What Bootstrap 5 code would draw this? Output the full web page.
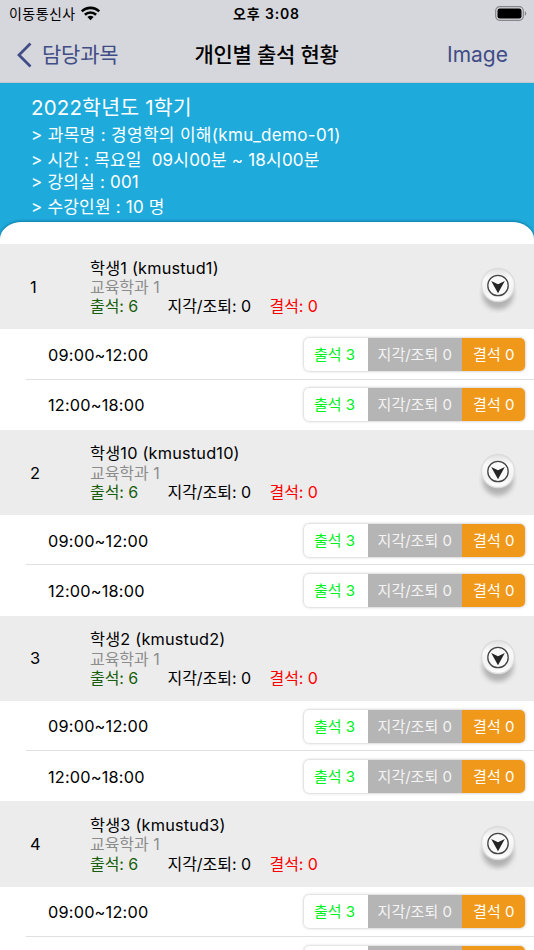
<!DOCTYPE html>
<html lang="ko">
<head>
<meta charset="utf-8">
<meta name="viewport" content="width=device-width, initial-scale=1">
<title>개인별 출석 현황</title>
<link href="https://cdn.jsdelivr.net/npm/bootstrap@5.3.0/dist/css/bootstrap.min.css" rel="stylesheet">
<style>
body{font-family:Inter,"Noto Sans CJK KR",sans-serif;font-size:16px;color:#000;background:#fff;height:950px;overflow:hidden}
.top-area{background:#d6d7dc;height:83px;border-bottom:1px solid #c4c8ce}
.status{height:27px;font-size:14px;line-height:27px;padding:0 7px 0 9px}
.status>*,.title-row>*{flex:1 1 0;white-space:nowrap}
.carrier{letter-spacing:.45px}
.clock{font-weight:600;letter-spacing:.85px;padding-right:3px}
.title-row{height:55px;padding:0 26px 0 16px;font-size:21px;line-height:55px}
.title-row .heading{font-weight:500;letter-spacing:-.25px;flex:0 0 auto;margin-left:9px}
.tint{color:#414d87}
.back{letter-spacing:-.2px}
.hero{background:#1eabdb;height:161px;color:#fff;padding-top:10px}
.hero-text{padding-left:31px;height:129px;white-space:pre}
.term{font-size:20.500px;line-height:29px;letter-spacing:.17px;height:30px}
.info{font-size:17px;line-height:25px;height:25px;letter-spacing:.2px}
.info.tight{line-height:19px;height:23px}
.info.last{line-height:23px}
.info.course{letter-spacing:.32px}
.sheet{background:#fff;height:22px;border-radius:22px 22px 0 0/17px 17px 0 0;box-shadow:0 -1px 3px rgba(0,50,90,.4);clip-path:inset(-5px 0 0 0)}
.student{background:#ececec;height:85.3px;padding-right:17px}
.num{width:90px;padding-left:30px;padding-top:1px;font-size:16.500px}
.lines{line-height:19.4px;white-space:pre;padding-top:2px;letter-spacing:-.05px}
.who{font-size:16.300px;letter-spacing:.2px}
.dept{color:#8c8c8c}
.present{color:#195e0d;width:77.500px}
.late{width:102px}
.absent{color:#f00}
.session{height:50.25px;padding:0 9px 0 48px}
.session.parted{background:linear-gradient(#e0e0e0,#e0e0e0) 26px 100%/100% 1px no-repeat}
.time{font-size:16.300px;letter-spacing:.2px;padding-top:1px}
.tallies{height:33px;border-radius:5px;box-shadow:0 0 3px rgba(0,0,0,.3);font-size:15px;line-height:34px;white-space:nowrap;text-align:center;overflow:hidden}
.ok{width:64px;color:#00f21c;padding-right:3px}
.tardy{width:93.500px;background:#b5b5b5;color:#f4f4f4}
.miss{width:63.500px;background:#f09819;color:#fff;padding-left:1px}
.knob{margin-top:5px}
</style>
<script src="https://cdn.jsdelivr.net/npm/bootstrap@5.3.0/dist/js/bootstrap.bundle.min.js"></script>
</head>
<body>
<svg width="0" height="0" class="position-absolute">
<defs>
<linearGradient id="face" x1="0" y1="0" x2="0" y2="1"><stop offset="0" stop-color="#e2e2e2"/><stop offset=".3" stop-color="#fafafa"/><stop offset=".7" stop-color="#f2f2f2"/><stop offset="1" stop-color="#fff"/></linearGradient>
<filter id="soft" x="-30%" y="-30%" width="160%" height="160%"><feGaussianBlur stdDeviation="2.500"/></filter>
<symbol id="expand" viewBox="0 0 38 48">
<circle cx="19" cy="29" r="15.500" fill="#999" opacity=".7" filter="url(#soft)"/>
<circle cx="19" cy="20" r="17.300" fill="#dcdcdc"/>
<circle cx="19" cy="20" r="15.800" fill="url(#face)"/>
<circle cx="19" cy="20.500" r="10.200" fill="#fafafa" stroke="#444" stroke-width="1.300"/>
<path d="M12.200 16L19 19.300l6.800-3.300L19 28.300z" fill="#252525"/>
</symbol>
</defs>
</svg>
<header class="top-area">
<div class="status d-flex align-items-center">
<div class="carrier d-flex align-items-center"><span>이동통신사</span>
<svg class="ms-1" width="21" height="15" viewBox="0 0 20 15" fill="none" stroke="#000" stroke-width="2.600"><path d="M1.300 5.400a12.600 12.600 0 0 1 17.400 0M4.400 8.800a8 8 0 0 1 11.200 0"/><path d="M10 14.300l-3.100-3.200a4.500 4.500 0 0 1 6.200 0z" fill="#000" stroke="none"/></svg></div>
<div class="clock text-center">오후 3:08</div>
<div class="d-flex justify-content-end"><svg width="32" height="15" viewBox="0 0 32 15"><rect x=".7" y=".7" width="27.600" height="13.600" rx="4" fill="none" stroke="#85868a" stroke-width="1.200"/><rect x="2.500" y="2.500" width="24" height="10" rx="2.300"/><path d="M29.800 5q3 2.500 0 5z" fill="#85868a"/></svg></div>
</div>
<div class="title-row d-flex align-items-center tint">
<div class="back d-flex align-items-center"><svg width="18" height="26" viewBox="0 0 18 26" fill="none" stroke="#414d87" stroke-width="2.800" class="me-2"><path d="M14.500 1.500L3 13l11.500 11.500"/></svg>담당과목</div>
<div class="heading text-black">개인별 출석 현황</div>
<div class="text-end">Image</div>
</div>
</header>
<section class="hero">
<div class="hero-text"><div class="term">2022학년도 1학기</div><div class="info course">&gt; 과목명 : 경영학의 이해(kmu_demo-01)</div><div class="info">&gt; 시간 : 목요일  09시00분 ~ 18시00분</div><div class="info tight">&gt; 강의실 : 001</div><div class="info last">&gt; 수강인원 : 10 명</div></div>
<div class="sheet"></div>
</section>
<main id="students"></main>
<script>
const students = [['학생1','kmustud1'],['학생10','kmustud10'],['학생2','kmustud2'],['학생3','kmustud3']];
const session = (time, parted) => `<div class="session ${parted ? 'parted' : ''} d-flex align-items-center justify-content-between"><span class="time">${time}</span><div class="tallies d-flex"><span class="ok">출석 3</span><span class="tardy">지각/조퇴 0</span><span class="miss">결석 0</span></div></div>`;
document.getElementById('students').innerHTML = students.map(([name, id], i) => `<section><div class="student d-flex align-items-center"><span class="num">${i + 1}</span><div class="lines flex-grow-1"><div class="who">${name} (${id})</div><div class="dept">교육학과 1</div><div class="d-flex"><span class="present">출석: 6</span><span class="late">지각/조퇴: 0</span><span class="absent">결석: 0</span></div></div><svg class="knob" width="38" height="48"><use href="#expand"/></svg></div>${session('09:00~12:00', true)}${session('12:00~18:00', false)}</section>`).join('');
</script>
</body>
</html>
